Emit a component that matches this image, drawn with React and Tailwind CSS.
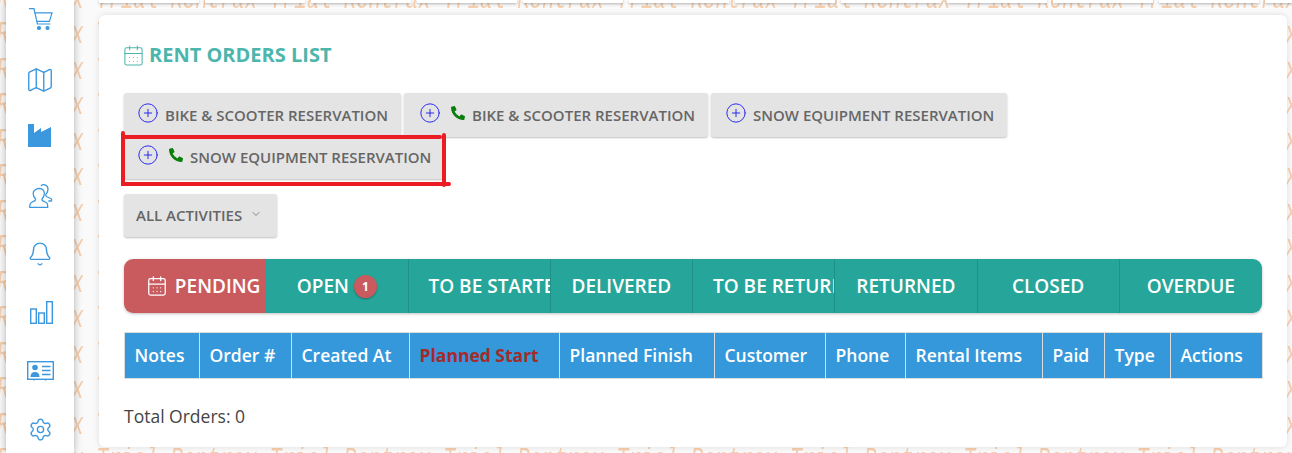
import React from "react";
import { CirclePlus, CalendarDays, ChevronDown, Map, Bell, Settings } from "lucide-react";
import { FaPhoneAlt } from "react-icons/fa";

const blue = "#3b97de";

function Cart() {
  return (
    <svg width="24" height="23" viewBox="0 0 24 23" fill="none" stroke={blue} strokeWidth="1.2">
      <path d="M0 .6h5l3.4 15.4h13" />
      <path d="M5.4 4.8H23l-2.6 8.6H7.8" />
      <circle cx="10" cy="20" r="1.5" fill={blue} />
      <circle cx="18.5" cy="20" r="1.5" fill={blue} />
    </svg>
  );
}
function Factory() {
  return (
    <svg width="23" height="23" viewBox="0 0 23 23" fill={blue}>
      <path d="M0 0h6v9l7-5v4l10-5v20H0z" />
    </svg>
  );
}
function Users() {
  return (
    <svg width="25" height="24" viewBox="0 0 25 24" fill="none" stroke={blue} strokeWidth="1.3">
      <path d="M12 2c1-1.3 3-1.6 4.600-.8 2.200 1.100 2.700 3.800 2 6-.4 1.300-1 2.400-1.800 3.200-.3 1.400.2 2 1.500 2.600l3.500 1.500c1.200.5 1 2 .5 2.500h-3" />
      <path d="M10.500 4.500c3 0 5 2.300 4.800 5.200-.1 2-1 3.800-2.200 5-.3 1.300.1 2 1.300 2.500l2.800 1.300c1.400.7 1.700 1.900 1.500 4.800H.8c-.2-2.900.1-4.100 1.500-4.800l2.800-1.300c1.200-.5 1.600-1.200 1.300-2.500-1.200-1.200-2.100-3-2.200-5-.2-2.900 2.800-5.200 5.800-5.200z" />
    </svg>
  );
}
function Bars() {
  return (
    <svg width="23" height="23" viewBox="0 0 23 23" fill="none" stroke={blue} strokeWidth="1.4">
      <rect x=".7" y="8" width="5.600" height="14.300" />
      <rect x="8.700" y="12" width="5.600" height="10.300" />
      <rect x="16.700" y=".7" width="5.600" height="21.600" />
    </svg>
  );
}
function IdCard() {
  return (
    <svg width="27" height="20" viewBox="0 0 27 20" fill="none" stroke={blue}>
      <rect x=".7" y=".7" width="25.600" height="17.600" strokeWidth="1.400" />
      <circle cx="8" cy="6.500" r="2.800" fill={blue} stroke="none" />
      <path d="M3.500 16c0-3.500 1.500-5 4.500-5s4.500 1.500 4.500 5z" fill={blue} stroke="none" />
      <path d="M15 5.500h8.500M15 9.500h8.500M15 13.500h8.500" strokeWidth="1.300" />
      <path d="M7 18v1.500M18.500 18v1.500" strokeWidth="1.300" />
    </svg>
  );
}

function ResButton({ phone, label, pad = "pl-[15px]" }) {
  return (
    <button className={`flex h-[44px] mb-[-2px] items-center rounded-[3px] bg-[#e4e4e4] ${pad} pr-[13px] text-[15px] font-semibold text-[#666] shadow-[0_1px_2px_rgba(0,0,0,0.25)]`}>
      <CirclePlus size={22} strokeWidth={1} color="#1a1af0" className="ml-[-2px] mr-[6px] mt-[-5px] shrink-0" />
      {phone && <FaPhoneAlt size={14} color="#0a7d0a" className="ml-[4px] mr-[7px] mt-[-4px] shrink-0" />}
      <span>{label}</span>
    </button>
  );
}

const tabs = ["OPEN", "TO BE STARTED", "DELIVERED", "TO BE RETURNED", "RETURNED", "CLOSED", "OVERDUE"];
const cols = [
  ["Notes", "w-[75px]"],
  ["Order #", "w-[92px]"],
  ["Created At", "w-[118px]"],
  ["Planned Start", "w-[150px]"],
  ["Planned Finish", "w-[155px]"],
  ["Customer", "w-[111px]"],
  ["Phone", "w-[80px]"],
  ["Rental Items", "w-[137px]"],
  ["Paid", "w-[62px]"],
  ["Type", "w-[66px]"],
  ["Actions", "w-[92px]"],
];
const rows = Array.from({ length: 14 });

export default function App() {
  return (
    <div className="relative flex h-[453px] w-full overflow-hidden bg-[#fbfafa] font-['Open_Sans',sans-serif]">
      <div aria-hidden="true" className="absolute left-0 top-[-9.5px] flex select-none flex-col text-[#f6cfae] blur-[0.5px]">
        {rows.map((_, i) => (
          <div key={i} className="ml-[-3px] h-[35.5px] origin-bottom scale-y-150 whitespace-nowrap font-['Liberation_Mono',monospace] text-[20.65px] italic leading-[35.5px]">
            {"Rentrax Trial ".repeat(8)}
          </div>
        ))}
      </div>

      <aside className="relative ml-[6px] flex h-[453px] w-[68px] shrink-0 flex-col items-center bg-white pt-[8px] shadow-[0_0_8px_rgba(0,0,0,0.3)]">
        <div className="flex h-[23px] items-center pl-[1px]"><Cart /></div>
        <div className="mt-[34px]"><Map size={30} strokeWidth={1.1} color={blue} /></div>
        <div className="mt-[29px] ml-[-1px]"><Factory /></div>
        <div className="mt-[37px] ml-[2px]"><Users /></div>
        <div className="mt-[33px] ml-[-1px]"><Bell size={26} strokeWidth={1.3} color={blue} /></div>
        <div className="mt-[34px] ml-[2px]"><Bars /></div>
        <div className="mt-[37px]"><IdCard /></div>
        <div className="mt-[36px]"><Settings size={25} strokeWidth={1.3} color={blue} /></div>
      </aside>

      <main className="relative flex min-w-0 flex-1 flex-col pl-[25px] pr-[5px]">
        <div className="flex h-[3px] gap-[6px]">
          {Array.from({ length: 12 }).map((_, i) => (
            <div key={i} className="h-[3px] w-[100px] shrink-0 bg-white shadow-[0_1px_3px_rgba(0,0,0,0.3)]" />
          ))}
        </div>
        <section className="relative mt-[12px] h-[432px] rounded-[6px] bg-white pl-[25px] pr-[25px] pt-[27px] shadow-[0_0_6px_rgba(0,0,0,0.12)]">
          <h1 className="flex h-[26px] items-center text-[20px] font-bold text-[#4db6ac]">
            <CalendarDays size={23} strokeWidth={1.1} className="ml-[-2px] mr-[4px] shrink-0" />
            RENT ORDERS LIST
          </h1>
          <div className="mt-[25px] flex flex-wrap gap-x-[3px]">
            <ResButton label="BIKE & SCOOTER RESERVATION" />
            <ResButton phone pad="pl-[17px]" label="BIKE & SCOOTER RESERVATION" />
            <ResButton pad="pl-[16px]" label="SNOW EQUIPMENT RESERVATION" />
            <ResButton phone label="SNOW EQUIPMENT RESERVATION" />
          </div>
          <button className="mt-[17px] flex h-[43px] items-center rounded-[3px] bg-[#e4e4e4] pl-[12px] pr-[15px] text-[15px] font-semibold text-[#666] shadow-[0_1px_2px_rgba(0,0,0,0.25)]">
            ALL ACTIVITIES
            <ChevronDown size={12} strokeWidth={1.5} className="ml-[8px] mt-[-3px]" />
          </button>

          <div className="mt-[22px] grid h-[54px] grid-cols-8 overflow-hidden rounded-[9px] pt-0 text-[19px] font-semibold text-white shadow-[0_1px_3px_rgba(0,0,0,0.25)]">
            <div className="flex min-w-0 items-center justify-center overflow-hidden whitespace-nowrap bg-[#c95b5f] pl-[16px] pt-[1px]">
              <CalendarDays size={22} strokeWidth={1.4} className="mr-[7px] mt-[-1px] shrink-0" />
              PENDING
            </div>
            {tabs.map((t) => (
              <div key={t} className="flex min-w-0 items-center overflow-hidden border-r border-[#219187] bg-[#26a69a] px-5 pt-[1px] last:border-r-0">
                <span className="block w-full whitespace-nowrap text-center">
                  <span className="inline-flex items-center">
                    {t}
                    {t === "OPEN" && (
                      <span className="ml-[5px] flex h-[23px] w-[23px] items-center justify-center rounded-full bg-[#c95b5f] text-[12px] font-bold shadow-[0_1px_2px_rgba(0,0,0,0.3)]">1</span>
                    )}
                  </span>
                </span>
              </div>
            ))}
          </div>

          <table className="mt-[19px] w-full table-fixed border-collapse bg-[#3498db] text-[17.5px] font-semibold text-white">
            <thead>
              <tr className="h-[46px]">
                {cols.map(([c, w]) => (
                  <th key={c} className={`${w} border border-[#dddddd] pl-[9.5px] pr-[10px] pb-[1px] text-left ${c === "Planned Start" ? "font-bold text-[#a52a2a]" : "font-semibold"}`}>{c}</th>
                ))}
              </tr>
            </thead>
          </table>

          <p className="mt-[25px] text-[17.5px] leading-[24px] text-[#444]">Total Orders: 0</p>
        </section>

        <svg className="absolute left-[47px] top-[131px]" width="332" height="58" viewBox="0 0 332 58" fill="none" stroke="#ec1c24" strokeWidth="4" strokeLinecap="round">
          <path d="M2 2v51h326" />
          <path d="M2 6h317" />
          <path d="M323 4v50" />
        </svg>
      </main>
    </div>
  );
}
